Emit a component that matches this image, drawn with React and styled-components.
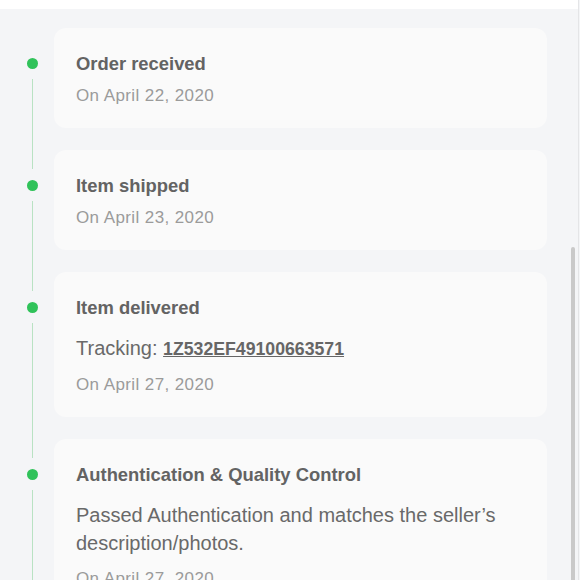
import React from 'react';
import styled, { createGlobalStyle } from 'styled-components';

const steps = [
    { title: 'Order received', date: 'On April 22, 2020' },
    { title: 'Item shipped', date: 'On April 23, 2020' },
    {
        title: 'Item delivered',
        tracking: '1Z532EF49100663571',
        date: 'On April 27, 2020',
    },
    {
        title: 'Authentication & Quality Control',
        text: 'Passed Authentication and matches the seller’s description/photos.',
        date: 'On April 27, 2020',
    },
];

const App = () => {
    return (
        <Page>
            <GlobalStyle />
            <Header />
            <Timeline>
                {steps.map((step, i) => (
                    <Row key={step.title}>
                        <Rail>
                            <TopLine $first={i === 0} />
                            <Dot />
                            <BottomLine />
                        </Rail>
                        <Card>
                            <Title>{step.title}</Title>
                            {step.tracking && (
                                <Body>
                                    Tracking: <TrackLink>{step.tracking}</TrackLink>
                                </Body>
                            )}
                            {step.text && <Body>{step.text}</Body>}
                            <DateText>{step.date}</DateText>
                        </Card>
                    </Row>
                ))}
            </Timeline>
            <ScrollThumb />
        </Page>
    );
};

const GlobalStyle = createGlobalStyle`
    html, body {
        margin: 0;
        padding: 0;
        background: #f4f5f7;
        overflow: hidden;
    }
`;

const Page = styled.div`
    position: relative;
    width: 578px;
    height: 580px;
    overflow: hidden;
    background: #f4f5f7;
    border-right: 1px solid #e4e5e7;
    font-family: 'Liberation Sans', Arial, sans-serif;
`;

const Header = styled.div`
    height: 9px;
    background: #fff;
`;

const Timeline = styled.div`
    display: flex;
    flex-direction: column;
    padding-top: 19px;
`;

const Row = styled.div`
    display: flex;
    padding-bottom: 22px;
`;

const Rail = styled.div`
    display: flex;
    flex-direction: column;
    align-items: center;
    width: 54px;
    flex-shrink: 0;
    padding-left: 10px;
    box-sizing: border-box;
    margin-bottom: -22px;
`;

const TopLine = styled.div`
    width: 1px;
    height: 19px;
    background: ${(p) => (p.$first ? 'transparent' : '#b9e2c3')};
`;

const Dot = styled.div`
    width: 11px;
    height: 11px;
    margin: 11px 0 10px;
    border-radius: 50%;
    background: #30c25a;
`;

const BottomLine = styled.div`
    width: 1px;
    flex: 1;
    background: #b9e2c3;
`;

const Card = styled.div`
    width: 493px;
    box-sizing: border-box;
    padding: 24px 22px 20px;
    background: #fafafa;
    border-radius: 12px;
    display: flex;
    flex-direction: column;
`;

const Title = styled.div`
    font-size: 18.4px;
    font-weight: 700;
    color: #636363;
    line-height: 24px;
`;

const Body = styled.div`
    margin: 14px 0 2px;
    font-size: 20px;
    line-height: 28px;
    color: #696969;
`;

const TrackLink = styled.span`
    font-size: 17.7px;
    font-weight: 700;
    color: #666;
    text-decoration: underline;
`;

const DateText = styled.div`
    margin-top: 8px;
    font-size: 17px;
    line-height: 24px;
    letter-spacing: 0.4px;
    color: #9b9b9b;
`;

const ScrollThumb = styled.div`
    position: absolute;
    right: 3px;
    top: 247px;
    width: 4px;
    height: 340px;
    border-radius: 2px;
    background: #c9c9c9;
`;

export default App;
